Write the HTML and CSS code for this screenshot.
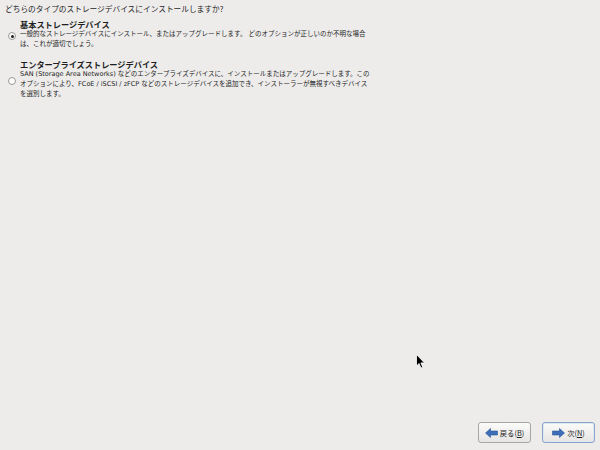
FILE: index.html
```html
<!DOCTYPE html>
<html lang="ja">
<head>
<meta charset="utf-8">
<link rel="stylesheet" href="styles.css">
</head>
<body>
<div class="page">
  <div class="content">
    <p class="question">どちらのタイプのストレージデバイスにインストールしますか?</p>
    <div class="option">
      <span class="radio checked"></span>
      <div class="opt-text">
        <div class="opt-title">基本ストレージデバイス</div>
        <div class="opt-desc">一般的なストレージデバイスにインストール、またはアップグレードします。 どのオプションが正しいのか不明な場合<br>は、これが適切でしょう。</div>
      </div>
    </div>
    <div class="option second">
      <span class="radio"></span>
      <div class="opt-text">
        <div class="opt-title">エンタープライズストレージデバイス</div>
        <div class="opt-desc">SAN (Storage Area Networks) などのエンタープライズデバイスに、インストールまたはアップグレードします。この<br>オプションにより、FCoE / iSCSI / zFCP などのストレージデバイスを追加でき、インストーラーが無視すべきデバイス<br>を選別します。</div>
      </div>
    </div>
  </div>
  <div class="buttons">
    <button class="btn">
      <svg class="ico" width="13" height="10" viewBox="0 0 13 10"><path d="M0.5 5 L5.5 0.5 L5.5 3 L12.5 3 L12.5 7 L5.5 7 L5.5 9.5 Z" fill="#3d6fb8" stroke="#2a5499" stroke-width="0.6"/></svg>
      <span>戻る(<u>B</u>)</span>
    </button>
    <button class="btn focus">
      <svg class="ico" width="13" height="10" viewBox="0 0 13 10"><path d="M12.5 5 L7.5 0.5 L7.5 3 L0.5 3 L0.5 7 L7.5 7 L7.5 9.5 Z" fill="#3d6fb8" stroke="#2a5499" stroke-width="0.6"/></svg>
      <span>次(<u>N</u>)</span>
    </button>
  </div>
  <svg class="cursor" width="10" height="16" viewBox="0 0 10 16"><path d="M0.5 0.5 L0.5 12 L3 9.5 L5 14 L6.8 13.2 L4.9 8.9 L8.5 8.9 Z" fill="#000" stroke="#fff" stroke-width="0.8"/></svg>
</div>
</body>
</html>
```
FILE: styles.css
```css
html, body {
  margin: 0;
  padding: 0;
}
body {
  background: #edeceb;
  font-family: "DejaVu Sans", "Noto Sans CJK JP", sans-serif;
  color: #1e1e1e;
}
.page {
  position: relative;
  width: 600px;
  height: 450px;
  display: flex;
  flex-direction: column;
  justify-content: space-between;
  box-sizing: border-box;
}
.content {
  padding: 4px 0 0 5px;
}
.question {
  margin: 0;
  font-size: 7.7px;
  line-height: 10px;
  font-family: "Noto Sans CJK JP", sans-serif;
}
.option {
  display: flex;
  align-items: center;
  margin-top: 5px;
}
.option.second {
  margin-top: 10px;
}
.radio {
  width: 6px;
  height: 6px;
  border: 1px solid #9a9a98;
  border-radius: 50%;
  background: #fafafa;
  margin: 4px 4px 0 3px;
  box-sizing: content-box;
  display: flex;
  align-items: center;
  justify-content: center;
  flex: none;
}
.radio.checked::after {
  content: "";
  width: 3px;
  height: 3px;
  border-radius: 50%;
  background: #202020;
}
.opt-title {
  font-family: "Noto Sans CJK JP", sans-serif;
  font-weight: bold;
  font-size: 8.2px;
  line-height: 10px;
}
.opt-desc {
  font-family: "DejaVu Sans", "Noto Sans CJK JP", sans-serif;
  font-size: 6.5px;
  line-height: 10px;
  white-space: nowrap;
}
.buttons {
  display: flex;
  justify-content: flex-end;
  gap: 11px;
  padding: 0 5px 7px 0;
}
.btn {
  width: 53px;
  height: 21px;
  border: 1px solid #a6a6a4;
  border-radius: 3px;
  background: linear-gradient(#fbfbfa, #e6e5e3);
  display: flex;
  align-items: center;
  justify-content: center;
  gap: 2px;
  padding: 0;
  font-family: "Noto Sans CJK JP", sans-serif;
  font-size: 7.3px;
  color: #222;
  box-sizing: border-box;
}
.btn.focus {
  border-color: #8aa3c8;
  box-shadow: inset 0 0 0 1px #dfe7f2;
}
.ico {
  flex: none;
}
.cursor {
  position: absolute;
  left: 416px;
  top: 354px;
}
```
